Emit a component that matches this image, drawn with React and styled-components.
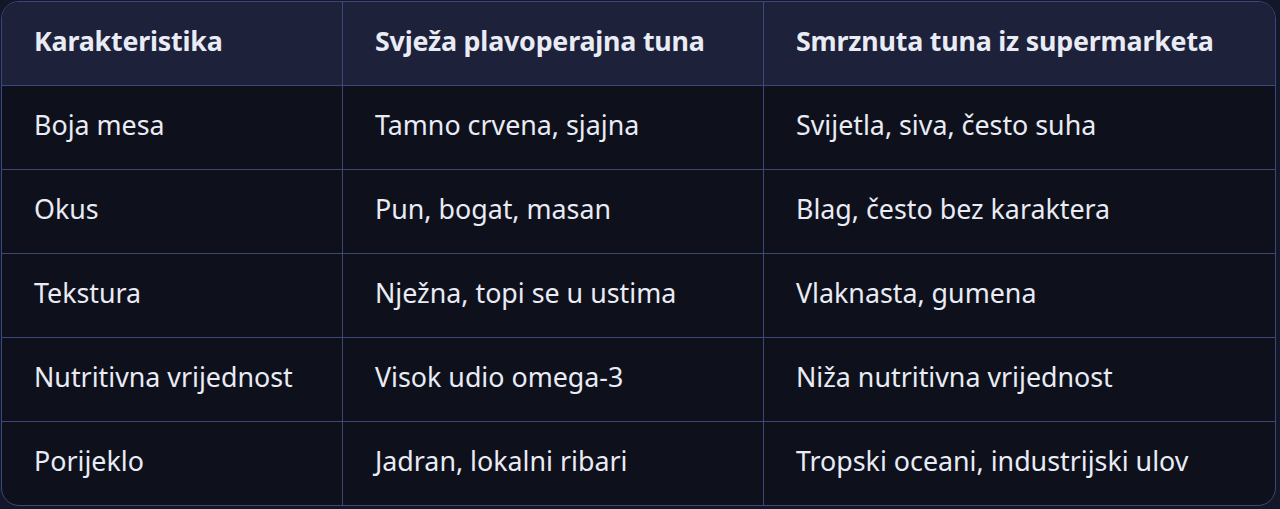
import React from 'react';
import styled, { createGlobalStyle } from 'styled-components';

const rows = [
  ['Boja mesa', 'Tamno crvena, sjajna', 'Svijetla, siva, često suha'],
  ['Okus', 'Pun, bogat, masan', 'Blag, često bez karaktera'],
  ['Tekstura', 'Nježna, topi se u ustima', 'Vlaknasta, gumena'],
  ['Nutritivna vrijednost', 'Visok udio omega-3', 'Niža nutritivna vrijednost'],
  ['Porijeklo', 'Jadran, lokalni ribari', 'Tropski oceani, industrijski ulov'],
];

const headers = ['Karakteristika', 'Svježa plavoperajna tuna', 'Smrznuta tuna iz supermarketa'];

const Global = createGlobalStyle`
  html, body {
    margin: 0;
    background: #13172a;
  }
  body {
    font-family: "Noto Sans", sans-serif;
    color: #e9ebf5;
  }
`;

const Page = styled.div`
  padding: 1px 4px 3px 1px;
`;

const Table = styled.div`
  display: grid;
  grid-template-columns: 341px 421px 1fr;
  border: 1px solid #3d4878;
  border-radius: 18px;
  overflow: hidden;
  background: #0e111b;
`;

const Cell = styled.div`
  display: flex;
  align-items: center;
  padding: 0 32px 6px;
  font-size: 26.8px;
  font-weight: ${(p) => (p.$head ? 700 : 400)};
  letter-spacing: ${(p) => (p.$head ? '-0.2px' : '0')};
  background: ${(p) => (p.$head ? '#1d2139' : 'transparent')};
  border-bottom: ${(p) => (p.$last ? 'none' : '1px solid #3d4878')};
  border-right: ${(p) => (p.$lastCol ? 'none' : '1px solid #3d4878')};
  box-sizing: border-box;
  height: ${(p) => (p.$last ? '83px' : '84px')};
  white-space: nowrap;
`;

export default function App() {
  return (
    <>
      <Global />
      <Page>
        <Table>
          {headers.map((h, i) => (
            <Cell key={h} $head $lastCol={i === 2}>{h}</Cell>
          ))}
          {rows.map((r, ri) =>
            r.map((c, ci) => (
              <Cell key={ri + '-' + ci} $lastCol={ci === 2} $last={ri === rows.length - 1}>
                {c}
              </Cell>
            ))
          )}
        </Table>
      </Page>
    </>
  );
}
